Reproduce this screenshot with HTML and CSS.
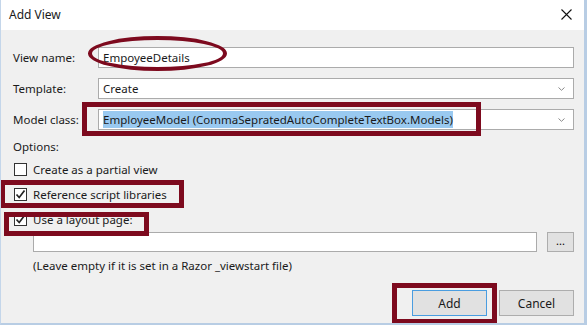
FILE: index.html
```html
<!DOCTYPE html>
<html lang="en">
<head>
    <meta charset="UTF-8">
    <title>Add View</title>
    <link rel="stylesheet" href="styles.css">
</head>
<body>

<div class="dialog">
    <div class="titlebar">
        <span class="title">Add View</span>
        <svg class="close" width="11" height="11" viewBox="0 0 11 11">
            <path d="M0.5 0.5 L10.5 10.5 M10.5 0.5 L0.5 10.5" stroke="#111" stroke-width="1.1" fill="none"/>
        </svg>
    </div>

    <div class="content">
        <div class="form-grid">
            <label>View name:</label>
            <div class="field">EmpoyeeDetails</div>

            <label>Template:</label>
            <div class="field select">
                <span>Create</span>
                <svg class="chevron" width="7" height="4" viewBox="0 0 7 4"><path d="M0.5 0.5 L3.5 3.3 L6.5 0.5" stroke="#8a8a8a" fill="none"/></svg>
            </div>

            <label>Model class:</label>
            <div class="field select">
                <span class="selected">EmployeeModel (CommaSepratedAutoCompleteTextBox.Models)</span>
                <svg class="chevron" width="7" height="4" viewBox="0 0 7 4"><path d="M0.5 0.5 L3.5 3.3 L6.5 0.5" stroke="#8a8a8a" fill="none"/></svg>
            </div>
        </div>

        <div class="options-label">Options:</div>

        <div class="check-row">
            <span class="checkbox"></span>
            <span>Create as a partial view</span>
        </div>
        <div class="check-row">
            <span class="checkbox">
                <svg width="11" height="11" viewBox="0 0 11 11"><path d="M1.5 5.5 L4.2 8.5 L9.5 1.5" stroke="#222" stroke-width="1.7" fill="none"/></svg>
            </span>
            <span>Reference script libraries</span>
        </div>
        <div class="check-row">
            <span class="checkbox">
                <svg width="11" height="11" viewBox="0 0 11 11"><path d="M1.5 5.5 L4.2 8.5 L9.5 1.5" stroke="#222" stroke-width="1.7" fill="none"/></svg>
            </span>
            <span>Use a layout page:</span>
        </div>

        <div class="layout-row">
            <div class="field layout-field"></div>
            <button class="browse">...</button>
        </div>
        <div class="hint">(Leave empty if it is set in a Razor _viewstart file)</div>

        <div class="buttons">
            <button class="btn default">Add</button>
            <button class="btn">Cancel</button>
        </div>
    </div>

    <!-- red annotation marks drawn over the dialog -->
    <div class="mark ellipse-name"></div>
    <div class="mark box-model"></div>
    <div class="mark box-ref"></div>
    <div class="mark box-layout"></div>
    <div class="mark box-add"></div>
</div>

</body>
</html>
```

FILE: styles.css
```css
body {
    margin: 0;
    padding: 0;
    background-color: #ffffff;
    font-family: "Noto Sans", "Open Sans", sans-serif;
    font-size: 11.5px;
    color: #1a1a1a;
}
.dialog {
    position: relative;
    width: 587px;
    height: 325px;
    box-sizing: border-box;
    border-left: 1px solid #c4d6ea;
    border-right: 3px solid #b8cde4;
    border-bottom: 2px solid #b8cde4;
    background-color: #f0f0f0;
    overflow: hidden;
}
.titlebar {
    height: 28px;
    background-color: #ffffff;
    display: flex;
    align-items: center;
    justify-content: space-between;
    padding: 0 12px 2px 8px;
}
.title {
    font-size: 12px;
}
.content {
    padding: 17px 10px 0 12px;
}
.form-grid {
    display: grid;
    grid-template-columns: 85px 1fr;
    row-gap: 10px;
    align-items: center;
}
.field {
    height: 21px;
    box-sizing: border-box;
    background-color: #ffffff;
    border: 1px solid #ababab;
    padding: 0 4px;
    display: flex;
    align-items: center;
    line-height: 17px;
}
.select {
    justify-content: space-between;
    padding-right: 8px;
}
.selected {
    background-color: #99c9f0;
}
.options-label {
    margin-top: 7px;
    height: 20px;
    line-height: 20px;
}
.check-row {
    display: flex;
    align-items: center;
    gap: 6px;
    height: 25px;
    padding-left: 1px;
}
.checkbox {
    width: 13px;
    height: 13px;
    box-sizing: border-box;
    border: 1px solid #333;
    background-color: #ffffff;
    display: flex;
    align-items: center;
    justify-content: center;
}
.layout-row {
    display: flex;
    gap: 10px;
    margin-top: 0;
    padding-left: 20px;
}
.layout-field {
    flex: 1;
    height: 20px;
}
.browse {
    width: 27px;
    height: 20px;
    padding: 0 0 4px;
    border: 1px solid #adadad;
    background-color: #e1e1e1;
    font-family: inherit;
    font-size: 11px;
}
.hint {
    padding-left: 20px;
    margin-top: 4px;
    line-height: 20px;
}
.buttons {
    display: flex;
    justify-content: flex-end;
    gap: 12px;
    margin-top: 14px;
}
.btn {
    width: 75px;
    height: 26px;
    border: 1px solid #adadad;
    background-color: #e1e1e1;
    font-family: inherit;
    font-size: 12px;
    color: #1a1a1a;
}
.btn.default {
    border-color: #4a9de0;
}
/* annotation marks */
.mark {
    position: absolute;
    box-sizing: border-box;
    border: 5px solid #7d0a1e;
}
.ellipse-name {
    left: 87px;
    top: 36px;
    width: 139px;
    height: 35px;
    border-width: 4px;
    border-radius: 50%;
}
.box-model {
    left: 81px;
    top: 102px;
    width: 399px;
    height: 34px;
}
.box-ref {
    left: -1px;
    top: 180px;
    width: 184px;
    height: 28px;
}
.box-layout {
    left: 3px;
    top: 212px;
    width: 145px;
    height: 24px;
}
.box-add {
    left: 391px;
    top: 283px;
    width: 105px;
    height: 41px;
}
```
